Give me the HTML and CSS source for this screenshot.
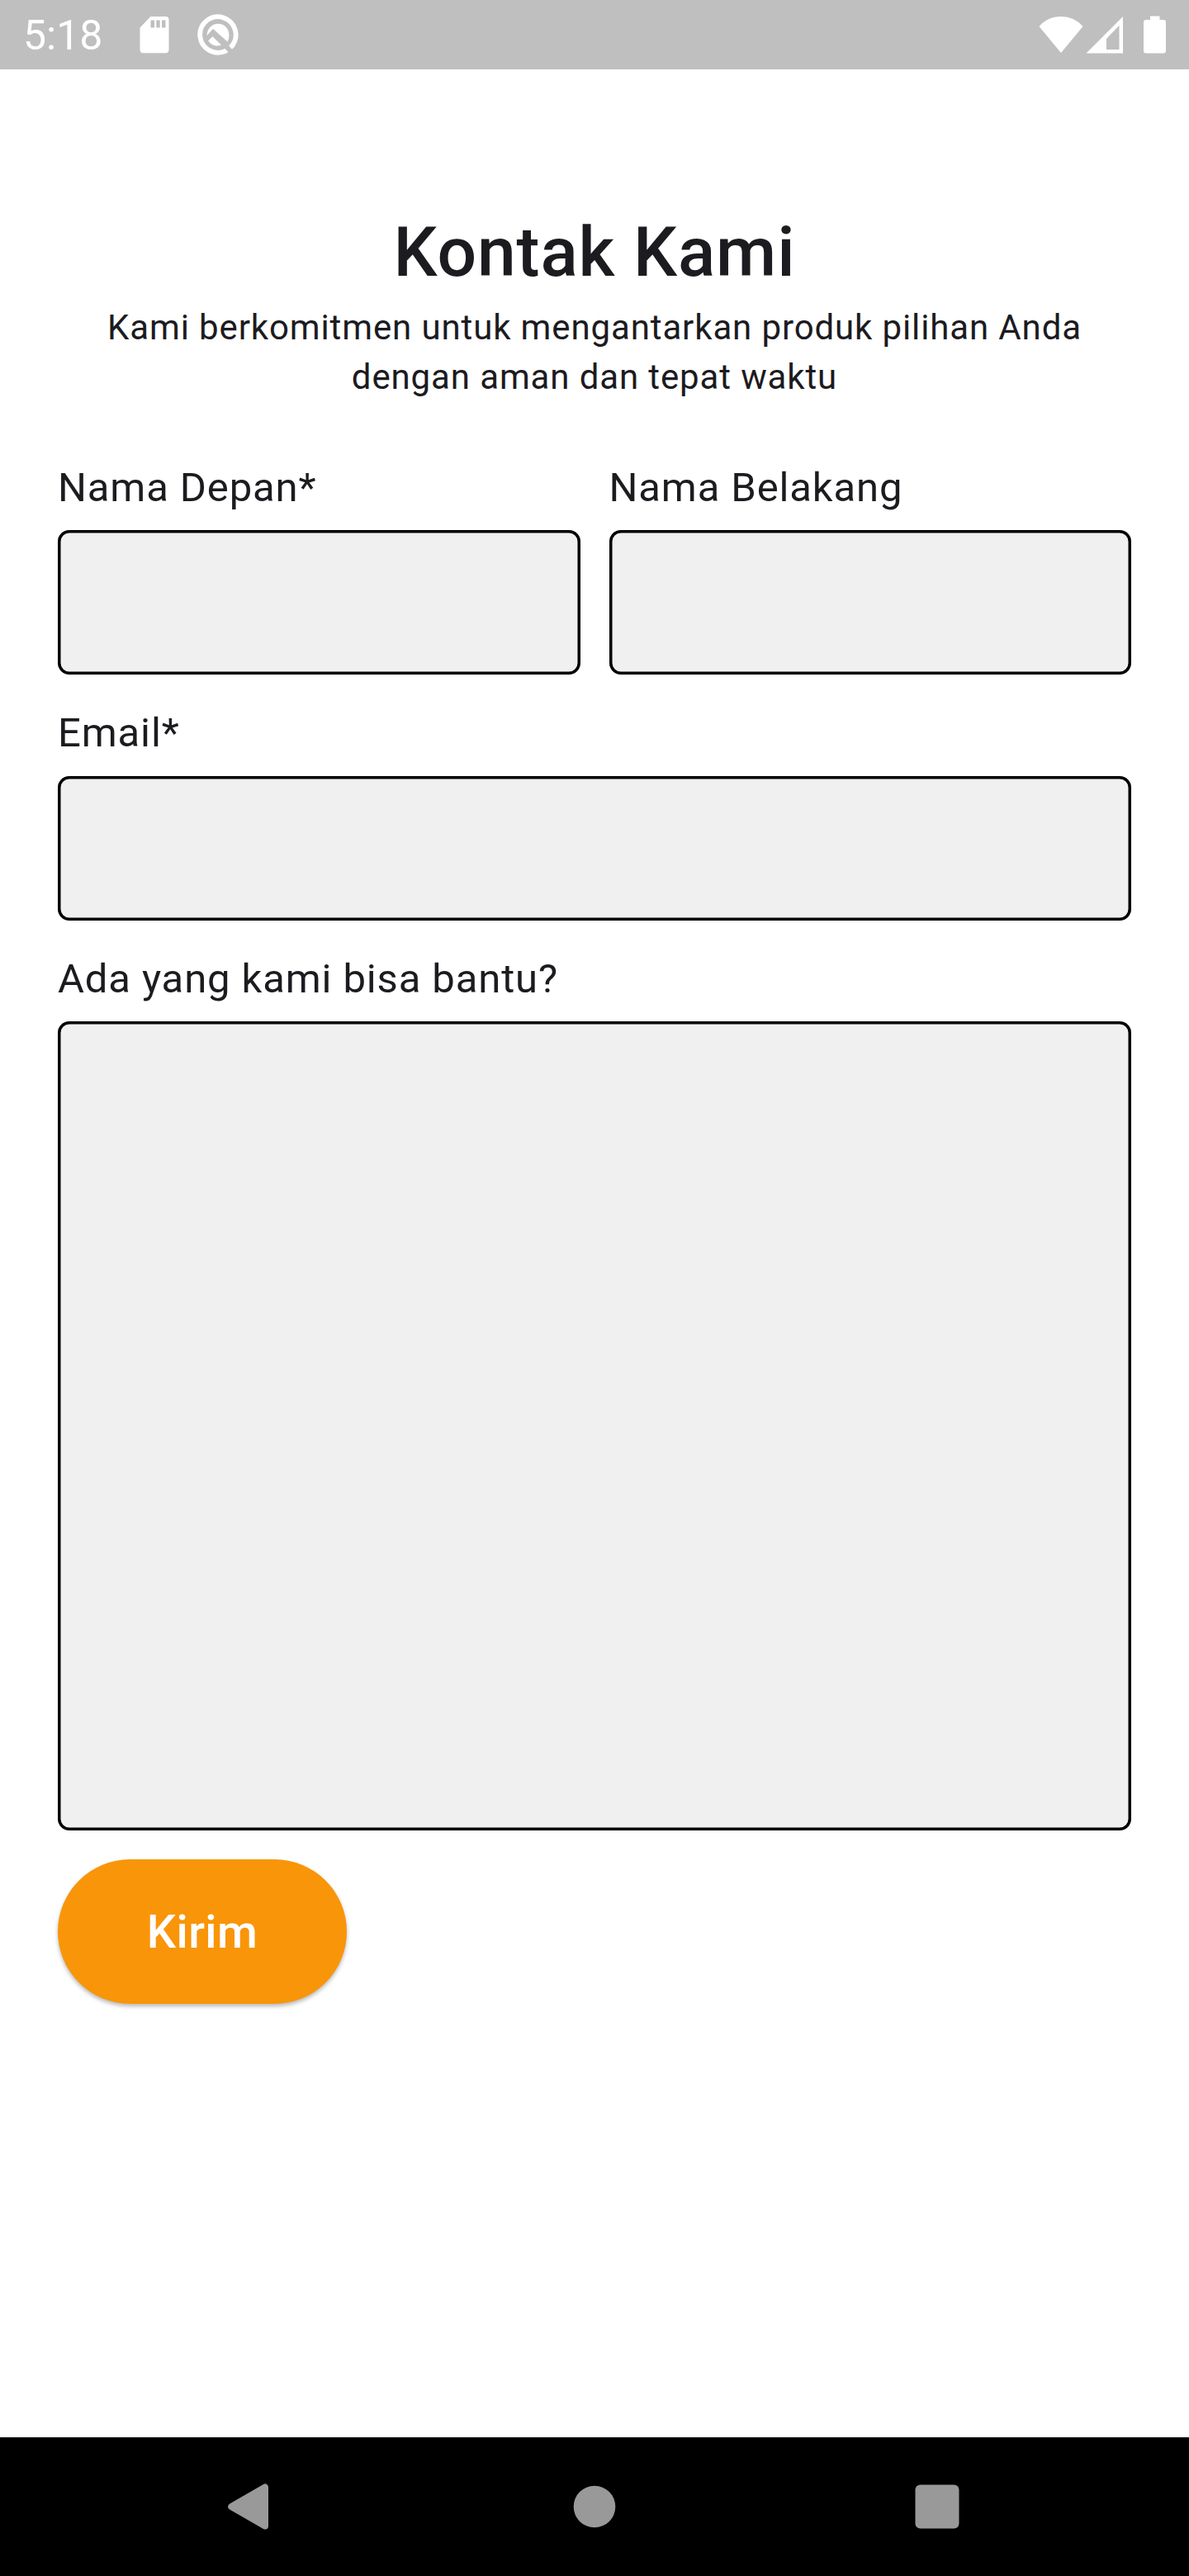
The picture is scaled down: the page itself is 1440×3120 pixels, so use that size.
FILE: index.html
```html
<!DOCTYPE html>
<html lang="id">
<head>
<meta charset="utf-8">
<title>Kontak Kami</title>
<link rel="stylesheet" href="styles.css">
</head>
<body>
<div class="screen">
  <header class="status-bar">
    <span class="clock">5:18</span>
    <svg class="icon-sd" width="36" height="46" viewBox="0 0 36 46"><path fill="#fff" fill-rule="evenodd" d="M13.5 1H31.5Q35.5 1 35.5 5V41Q35.5 45.200 31.500 45.200H4.500Q.5 45.200 .5 41V14.500ZM13.500 5.500V14.500H18V5.500ZM20.300 5.500V14.500H24.700V5.500ZM27 5.500V14.500H31.500V5.500Z"/></svg>
    <svg class="icon-q" width="50" height="50" viewBox="0 0 50 50"><path fill="none" stroke="#fff" stroke-width="5.800" d="M35 44.200A21.700 21.700 0 1 1 41.200 39.300"/><path fill="#fff" d="M33.500 42.500 37.500 46 33 48.500 30 46ZM38 38.300 42 42.800 46 38.500 42 35ZM11.500 26C12 17 18 11.800 25 11.800 33 11.800 38.500 18 38.500 25.500Q38.500 30 36.500 33.500L19 18ZM13.200 32.300 18.500 27.200 29 37.600Q19 41 13.200 32.300Z"/></svg>
    <div class="system-icons">
      <svg width="54" height="46" viewBox="0 0 54 46"><path fill="#fff" d="M.5 13Q11 1 27 1T53.500 13L27 45Z"/></svg>
      <svg class="icon-signal" width="46" height="46" viewBox="0 0 46 46"><path fill="#fff" fill-rule="evenodd" d="M.5 45.500 45 1V45.500ZM25 28V41H40.500V11.800Z"/></svg>
      <svg class="icon-battery" width="27" height="46" viewBox="0 0 27 46"><path fill="#fff" d="M8 .5H19.500V5H24Q27 5 27 8V42.500Q27 45.500 24 45.500H3Q0 45.500 0 42.500V8Q0 5 3 5H8Z"/></svg>
    </div>
  </header>
  <main class="page">
    <h1 class="title">Kontak Kami</h1>
    <p class="subtitle">Kami berkomitmen untuk mengantarkan produk pilihan Anda<br>dengan aman dan tepat waktu</p>
    <form class="form">
      <div class="row">
        <label class="field"><span class="label">Nama Depan*</span><input class="input" type="text"></label>
        <label class="field"><span class="label">Nama Belakang</span><input class="input" type="text"></label>
      </div>
      <label class="field"><span class="label">Email*</span><input class="input" type="email"></label>
      <label class="field"><span class="label">Ada yang kami bisa bantu?</span><textarea class="input input-message"></textarea></label>
      <button class="submit" type="button">Kirim</button>
    </form>
  </main>
  <nav class="nav-bar">
    <svg width="60" height="60" viewBox="0 0 60 60"><path fill="#999" stroke="#999" stroke-width="8" stroke-linejoin="round" d="M50 6.500V53.500L9.200 30Z"/></svg>
    <svg width="60" height="60" viewBox="0 0 60 60"><circle cx="32" cy="30" r="25.300" fill="#999"/></svg>
    <svg width="60" height="60" viewBox="0 0 60 60"><rect x="3.500" y="3.500" width="53" height="53" rx="6" fill="#999"/></svg>
  </nav>
</div>
</body>
</html>
```
FILE: styles.css
```css
* { box-sizing: border-box; }
body { margin: 0; background: #fff; color: #1c1b1f; font-family: Roboto, "Liberation Sans", sans-serif; }
svg { display: block; flex: none; }
.screen { width: 1440px; height: 3120px; display: flex; flex-direction: column; }

.status-bar { height: 84px; background: #bfbfbf; color: #fff; display: flex; align-items: center; padding: 0 28px; }
.clock { width: 141px; padding-top: 3px; font-size: 50px; line-height: 81px; }
.icon-q { margin-left: 34px; }
.system-icons { display: flex; margin-left: auto; }
.icon-signal { margin-left: 3px; }
.icon-battery { margin-left: 24px; }

.page { flex: 1; padding: 162px 70px 0; }
.title { margin: 0; font-size: 84px; line-height: 120px; font-weight: 500; letter-spacing: .875px; text-align: center; }
.subtitle { margin: .500px 0 68px; font-size: 42px; line-height: 60px; letter-spacing: .875px; text-align: center; }

.form { display: flex; flex-direction: column; gap: 35px; }
.row { display: grid; grid-template-columns: 1fr 1fr; gap: 35px; }
.field { display: flex; flex-direction: column; gap: 17.500px; }
.label { height: 70px; padding-top: 1px; font-size: 49px; line-height: 70px; letter-spacing: .875px; }
.input { width: 100%; height: 175px; margin: 0; padding: 0 35px; border: 0; border-radius: 14px; background: #f0f0f0; box-shadow: inset 0 0 0 3.500px #000; font: inherit; resize: none; appearance: none; }
.input-message { display: block; height: 980px; padding: 35px; }
.submit { width: 350px; height: 175px; padding: 0; border: 0; border-radius: 88px; background: #f99509; color: #fff; font-family: inherit; font-size: 56px; font-weight: 500; letter-spacing: .350px; box-shadow: 0 3px 5px rgba(0, 0, 0, .28); }

.nav-bar { height: 168px; background: #000; display: flex; align-items: center; justify-content: space-between; padding: 0 275px 0 271px; }
```
